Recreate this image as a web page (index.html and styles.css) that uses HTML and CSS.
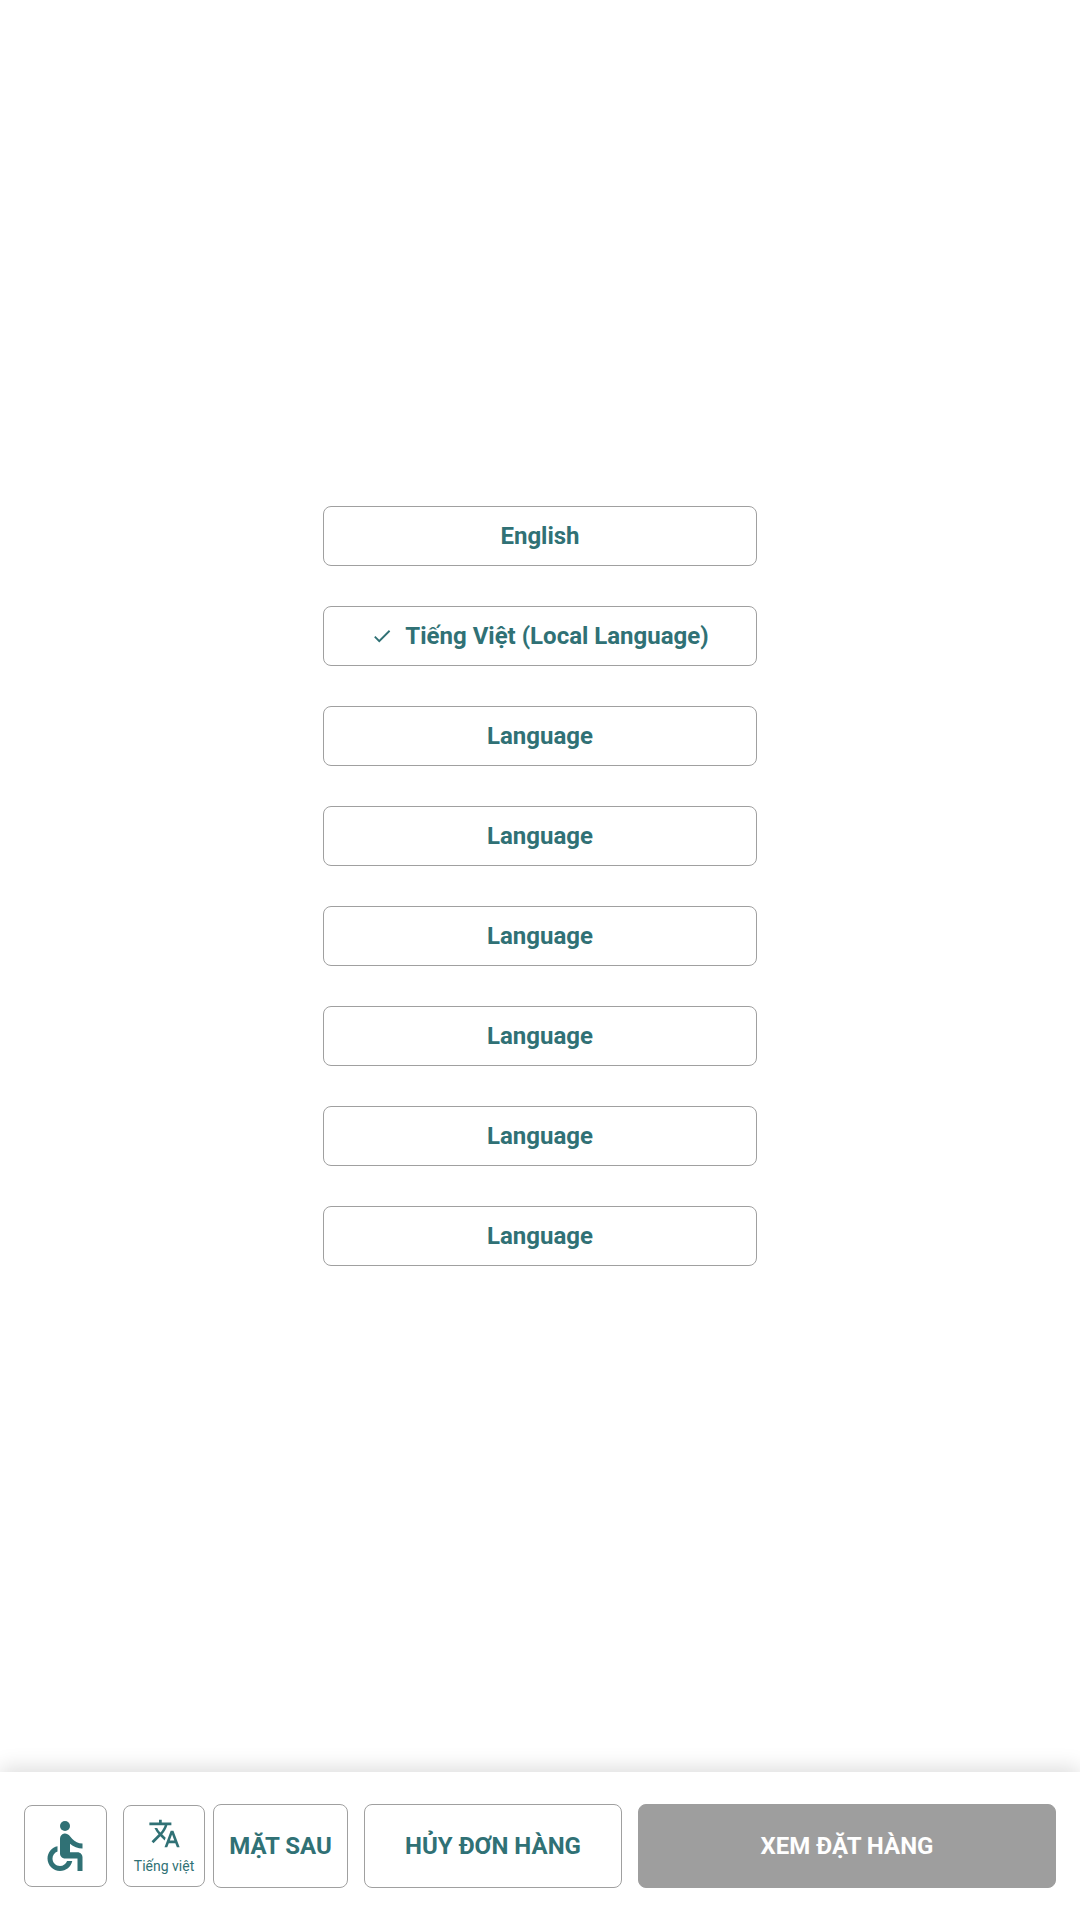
FILE: index.html
```html
<!DOCTYPE html>
<html lang="vi">
<head>
<meta charset="utf-8">
<title>Language</title>
<link rel="stylesheet" href="styles.css">
</head>
<body>
<main class="content">
  <div class="lang-list">
    <button class="lang-btn">English</button>
    <button class="lang-btn"><svg class="check" viewBox="0 0 24 24"><path d="M9 16.17 4.83 12l-1.42 1.41L9 19 21 7l-1.41-1.41z"/></svg>Tiếng Việt (Local Language)</button>
    <button class="lang-btn">Language</button>
    <button class="lang-btn">Language</button>
    <button class="lang-btn">Language</button>
    <button class="lang-btn">Language</button>
    <button class="lang-btn">Language</button>
    <button class="lang-btn">Language</button>
  </div>
</main>
<footer class="bar">
  <button class="tool tool-access" aria-label="Accessibility">
    <svg class="icon-access" viewBox="0 0 24 24"><circle cx="12" cy="4" r="2"/><path d="M19 13v-2c-1.54.02-3.09-.75-4.07-1.83l-1.29-1.43c-.17-.19-.38-.34-.61-.45-.01 0-.01-.01-.02-.01H13c-.35-.2-.75-.3-1.19-.26C10.76 7.11 10 8.04 10 9.09V15c0 1.1.9 2 2 2h5v5h2v-5.5c0-1.1-.9-2-2-2h-3v-3.45c1.29 1.07 3.25 1.94 5 1.95zm-6.17 5c-.41 1.16-1.52 2-2.83 2-1.66 0-3-1.34-3-3 0-1.31.84-2.41 2-2.83V12.1c-2.28.46-4 2.48-4 4.9 0 2.76 2.24 5 5 5 2.42 0 4.44-1.72 4.9-4h-2.07z"/></svg>
  </button>
  <button class="tool tool-lang">
    <svg class="icon-lang" viewBox="0 0 24 24"><path d="M12.87 15.07l-2.54-2.51.03-.03c1.74-1.94 2.98-4.17 3.71-6.53H17V4h-7V2H8v2H1v1.99h11.17C11.5 7.92 10.44 9.75 9 11.35 8.07 10.32 7.3 9.19 6.69 8h-2c.73 1.63 1.73 3.17 2.98 4.56l-5.09 5.02L4 19l5-5 3.11 3.11.76-2.04zM18.5 10h-2L12 22h2l1.12-3h4.75L21 22h2l-4.5-12zm-2.62 7l1.62-4.33L19.12 17h-3.24z"/></svg>
    <span class="tool-label">Tiếng việt</span>
  </button>
  <button class="action action-back">MẶT SAU</button>
  <button class="action action-cancel">HỦY ĐƠN HÀNG</button>
  <button class="action action-view">XEM ĐẶT HÀNG</button>
</footer>
</body>
</html>
```
FILE: styles.css
```css
* { box-sizing: border-box; }
html, body { margin: 0; padding: 0; }
body {
  width: 1080px;
  height: 1920px;
  display: flex;
  flex-direction: column;
  background: #fff;
  font-family: Roboto, "Noto Sans", sans-serif;
  color: #307175;
  overflow: hidden;
}
button { font-family: inherit; color: inherit; background: #fff; padding: 0; margin: 0; }
.content { flex: 1; padding-top: 506px; }
.lang-list { display: flex; flex-direction: column; align-items: center; gap: 40px; }
.lang-btn {
  width: 434px;
  height: 60px;
  border: 1px solid #a0a0a0;
  border-radius: 8px;
  font-size: 24px;
  font-weight: 700;
  display: flex;
  align-items: center;
  justify-content: center;
}
.check { width: 22px; height: 22px; fill: currentColor; margin-right: 12px; }
.bar {
  height: 148px;
  display: flex;
  align-items: flex-start;
  padding: 32px 24px 0;
  background: #fff;
  box-shadow: 0 -4px 20px rgba(0, 0, 0, 0.14);
}
.tool {
  margin-top: 1px;
  height: 82px;
  border: 1px solid #a0a0a0;
  border-radius: 8px;
  display: flex;
  flex-direction: column;
  align-items: center;
}
.tool-access { width: 83px; justify-content: center; margin-right: 16px; padding-right: 1px; }
.icon-access { width: 60px; height: 60px; fill: currentColor; }
.tool-lang { width: 82px; margin-right: 8px; padding-top: 11px; }
.icon-lang { width: 33px; height: 33px; fill: currentColor; }
.tool-label { font-size: 14px; line-height: 16px; margin-top: 8px; white-space: nowrap; }
.action {
  height: 84px;
  border: 1px solid #a0a0a0;
  border-radius: 8px;
  font-size: 24px;
  font-weight: 700;
  text-align: center;
}
.action-back { width: 135px; margin-right: 16px; }
.action-cancel { width: 258px; margin-right: 16px; }
.action-view { width: 418px; background: #9e9e9e; border-color: #9e9e9e; color: #fff; }
```
